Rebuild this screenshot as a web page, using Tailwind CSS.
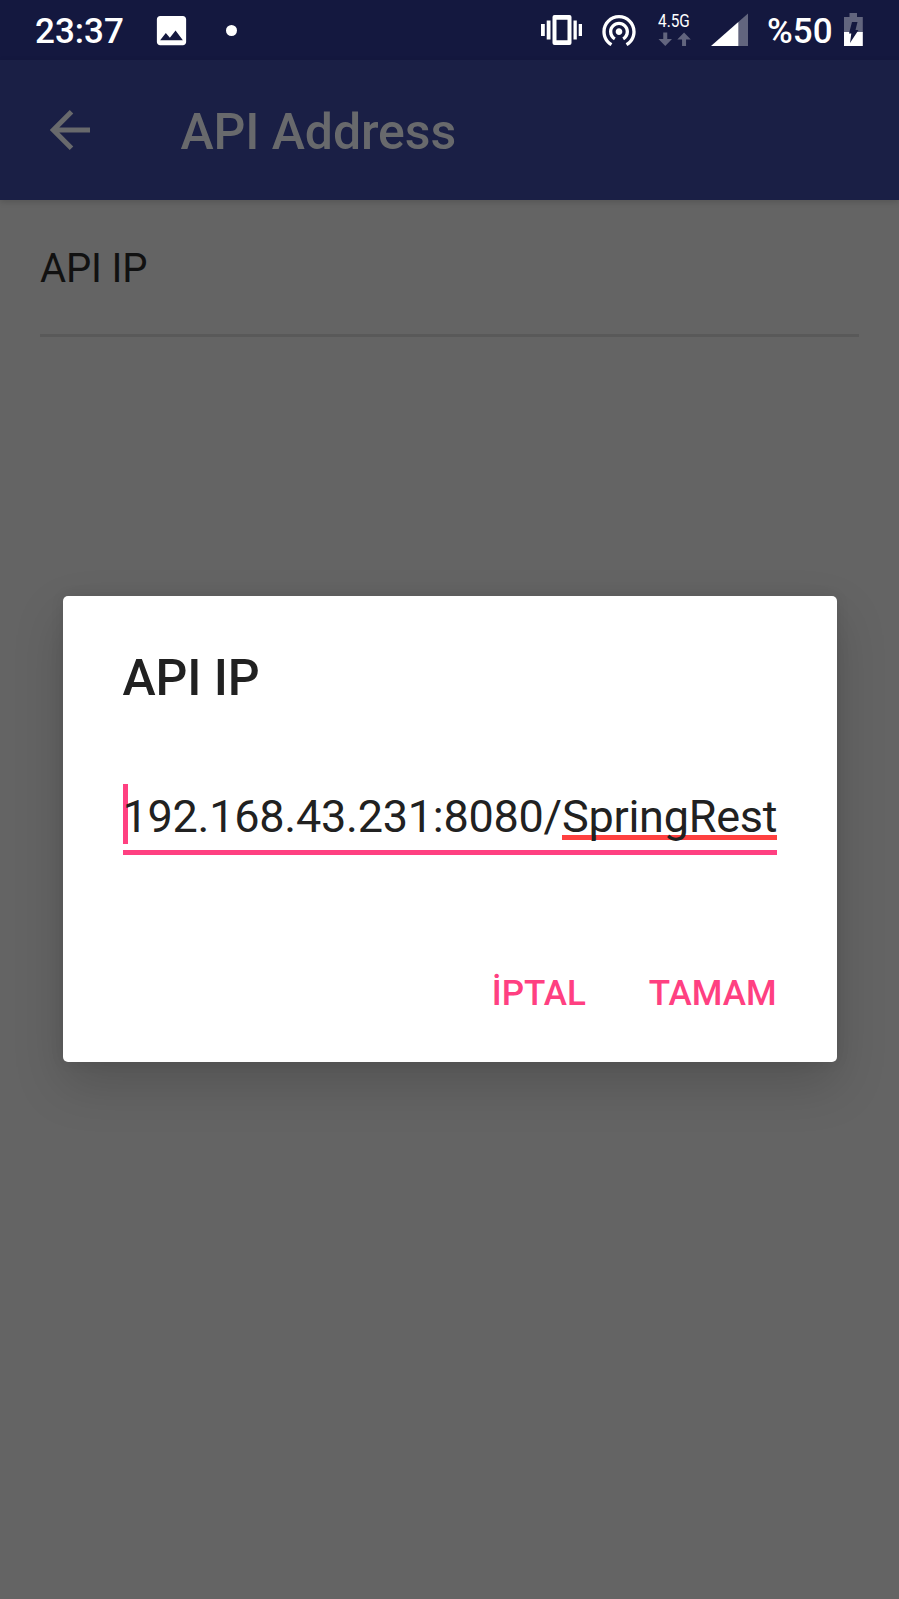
<!DOCTYPE html>
<html lang="tr">
<head>
<meta charset="utf-8">
<title>API Address</title>
<script src="https://cdn.jsdelivr.net/npm/@tailwindcss/browser@4"></script>
</head>
<body class="relative w-[899px] h-[1599px] overflow-hidden bg-[#646464] font-['Roboto',sans-serif]">
  <!-- Status bar -->
  <header class="flex h-[60px] items-start bg-[#14183f] text-white">
    <span class="ml-[35px] mt-[12px] w-[90.500px] text-[35px] leading-[40px] font-medium whitespace-nowrap">23:37</span>
    <svg class="ml-[26.5px] mt-[10.5px] size-[39px]" viewBox="0 0 24 24" fill="#fff"><path d="M21 19V5c0-1.100-.9-2-2-2H5c-1.100 0-2 .9-2 2v14c0 1.100.9 2 2 2h14c1.100 0 2-.9 2-2zM8.500 13.500l2.500 3.010L14.500 12l4.500 6H5l3.500-4.500z"/></svg>
    <span class="ml-[35px] mt-[25px] size-[10.500px] rounded-full bg-white"></span>
    <div class="ml-auto mr-[36px] flex items-start">
      <svg class="h-[60px] w-[42px]" viewBox="541 0 42 60" fill="#fff"><path fill-rule="evenodd" d="M554.500 15h15a2 2 0 0 1 2 2v26a2 2 0 0 1-2 2h-15a2 2 0 0 1-2-2V17a2 2 0 0 1 2-2zm2 4.700v20.600h11V19.700zM546.700 20.500h3.800v19h-3.800zM541 24h3.800v12H541zM573.500 20.500h3.300v19h-3.300zM578.700 24h3.300v12h-3.300z"/></svg>
      <svg class="ml-[16.500px] mt-[10px] size-[40px]" viewBox="0 0 24 24" fill="#fff"><path d="M12 11c-1.100 0-2 .9-2 2s.9 2 2 2 2-.9 2-2-.9-2-2-2zm6 2c0-3.310-2.690-6-6-6s-6 2.690-6 6c0 2.220 1.210 4.150 3 5.190l1-1.740c-1.190-.7-2-1.970-2-3.450 0-2.210 1.790-4 4-4s4 1.790 4 4c0 1.480-.81 2.750-2 3.450l1 1.740c1.790-1.040 3-2.970 3-5.190zM12 3C6.480 3 2 7.480 2 13c0 3.700 2.010 6.920 4.990 8.650l1-1.730C5.610 18.530 4 15.960 4 13c0-4.420 3.580-8 8-8s8 3.580 8 8c0 2.960-1.610 5.530-4 6.920l1 1.730c2.990-1.730 5-4.950 5-8.650 0-5.520-4.480-10-10-10z"/></svg>
      <div class="ml-[18.500px] mt-[11px] w-[33px]">
        <div class="w-[40px] origin-left scale-x-[0.83] text-[18.500px] leading-[21px] whitespace-nowrap">4.5G</div>
        <svg class="block h-[14px] w-[33px]" viewBox="0 0 33 14" fill="#62657e"><path d="M5.250 0.500h4v6.500h4.750l-6.750 7-6.750-7h4.750zM24.050 14V7.500h-4.750l6.750-7 6.750 7h-4.750v6.500z"/></svg>
      </div>
      <svg class="ml-[20px] h-[60px] w-[37px]" viewBox="711 0 37 60"><path fill="#62657e" d="M748 13.500V46h-10V22.300z"/><path fill="#fff" d="M738.300 22v24H711z"/></svg>
      <span class="ml-[19.500px] mt-[12px] w-[66px] text-[35px] leading-[40px] font-medium whitespace-nowrap">%50</span>
      <svg class="ml-[11px] h-[60px] w-[19px]" viewBox="844 0 19 60"><path fill="#62657e" d="M849.500 13h7.500v4h5.800v15.200H844V17h5.500z"/><path fill="#fff" d="M844 32h18.800v14H844z"/><path fill="#14183f" d="M852 22h5.500l-2 8h3l-8.500 13 1.300-9.500H849z"/></svg>
    </div>
  </header>
  <!-- App bar -->
  <div class="flex h-[140px] items-center bg-[#1a1f45] shadow-[0_2px_6px_rgba(0,0,0,0.15)]">
    <svg class="ml-[50px] h-[40px] w-[41px]" viewBox="0 0 41 40" fill="none" stroke="#68696c" stroke-width="5"><path d="M40 20H3.500M21.500 1.800L3.300 20l18.200 18.200"/></svg>
    <h1 class="ml-[89.500px] mt-[4px] text-[50px] leading-[60px] font-medium tracking-[-0.1px] whitespace-nowrap text-[#68696c]">API Address</h1>
  </div>
  <!-- Preference list -->
  <main class="mx-[40px] flex h-[136.500px] items-center border-b-[3px] border-[#595959] pt-[5px]">
    <span class="text-[40px] leading-[48px] tracking-[-0.15px] text-[#111]">API IP</span>
  </main>
  <!-- Dialog -->
  <section class="absolute left-[62.500px] top-[596px] flex h-[465.500px] w-[774px] flex-col rounded-[5px] bg-white px-[60px] text-[#212121] shadow-[0_22px_50px_rgba(0,0,0,0.17),0_0_14px_rgba(0,0,0,0.08)]">
    <h2 class="mt-[52px] text-[50px] leading-[60px] font-medium tracking-[-0.1px] whitespace-nowrap">API IP</h2>
    <div class="relative mt-[80px] flex h-[67px] w-[654px] items-start border-b-[5.500px] border-[#ff4081]">
      <span class="absolute left-0 -top-[4px] h-[60px] w-[5px] bg-[#ff4081]"></span>
      <span class="relative whitespace-nowrap text-[45px] leading-[58px] tracking-[-0.25px]">192.168.43.231:8080/<span class="bg-[linear-gradient(#ff4040,#ff4040)] bg-[length:100%_5px] bg-[position:0_45px] bg-no-repeat">SpringRest</span></span>
    </div>
    <div class="mt-[99px] flex justify-end gap-[63px] text-[35px] leading-[80px] font-medium text-[#ff4081]">
      <span>İPTAL</span>
      <span>TAMAM</span>
    </div>
  </section>
</body>
</html>
